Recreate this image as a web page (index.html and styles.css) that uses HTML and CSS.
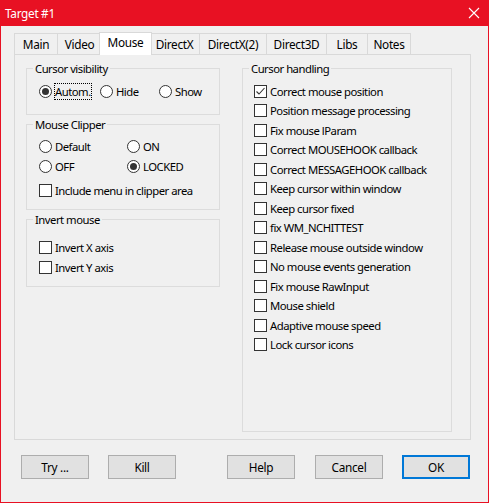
FILE: index.html
```html
<!DOCTYPE html>
<html lang="en">
<head>
<meta charset="utf-8">
<title>Target #1</title>
<link rel="stylesheet" href="styles.css">
</head>
<body>
<div class="window">
  <div class="titlebar">
    <span class="title">Target #1</span>
    <svg class="close" width="12" height="12" viewBox="0 0 12 12"><path d="M1 1L11 11M11 1L1 11" stroke="#fff" stroke-width="1.1" fill="none"/></svg>
  </div>
  <div class="client">
    <div class="tabs">
      <div class="tab t-main">Main</div>
      <div class="tab t-video">Video</div>
      <div class="tab t-mouse selected">Mouse</div>
      <div class="tab t-dx">DirectX</div>
      <div class="tab t-dx2">DirectX(2)</div>
      <div class="tab t-d3d">Direct3D</div>
      <div class="tab t-libs">Libs</div>
      <div class="tab t-notes">Notes</div>
    </div>
    <div class="panel">
      <div class="col-left">
        <div class="group g-vis">
          <div class="legend">Cursor visibility</div>
          <div class="vis-row">
            <div class="item"><span class="radio on"></span><span class="label focus">Autom.</span></div>
            <div class="item"><span class="radio"></span><span class="label">Hide</span></div>
            <div class="item"><span class="radio"></span><span class="label">Show</span></div>
          </div>
        </div>
        <div class="group g-clip">
          <div class="legend">Mouse Clipper</div>
          <div class="clip-grid">
            <div class="item"><span class="radio"></span><span class="label">Default</span></div>
            <div class="item"><span class="radio"></span><span class="label">ON</span></div>
            <div class="item"><span class="radio"></span><span class="label">OFF</span></div>
            <div class="item"><span class="radio on"></span><span class="label">LOCKED</span></div>
          </div>
          <div class="item clip-menu"><span class="check"></span><span class="label">Include menu in clipper area</span></div>
        </div>
        <div class="group g-inv">
          <div class="legend">Invert mouse</div>
          <div class="inv-list">
            <div class="item"><span class="check"></span><span class="label">Invert X axis</span></div>
            <div class="item"><span class="check"></span><span class="label">Invert Y axis</span></div>
          </div>
        </div>
      </div>
      <div class="group g-cursor">
        <div class="legend">Cursor handling</div>
        <div class="cursor-list">
          <div class="item"><span class="check"><svg width="11" height="11" viewBox="0 0 11 11"><path d="M1.5 5.5L4 8L9.5 2" stroke="#333" stroke-width="1.1" fill="none"/></svg></span><span class="label">Correct mouse position</span></div>
          <div class="item"><span class="check"></span><span class="label">Position message processing</span></div>
          <div class="item"><span class="check"></span><span class="label">Fix mouse lParam</span></div>
          <div class="item"><span class="check"></span><span class="label">Correct MOUSEHOOK callback</span></div>
          <div class="item"><span class="check"></span><span class="label">Correct MESSAGEHOOK callback</span></div>
          <div class="item"><span class="check"></span><span class="label">Keep cursor within window</span></div>
          <div class="item"><span class="check"></span><span class="label">Keep cursor fixed</span></div>
          <div class="item"><span class="check"></span><span class="label">fix WM_NCHITTEST</span></div>
          <div class="item"><span class="check"></span><span class="label">Release mouse outside window</span></div>
          <div class="item"><span class="check"></span><span class="label">No mouse events generation</span></div>
          <div class="item"><span class="check"></span><span class="label">Fix mouse RawInput</span></div>
          <div class="item"><span class="check"></span><span class="label">Mouse shield</span></div>
          <div class="item"><span class="check"></span><span class="label">Adaptive mouse speed</span></div>
          <div class="item"><span class="check"></span><span class="label">Lock cursor icons</span></div>
        </div>
      </div>
    </div>
    <div class="buttons">
      <button class="btn b-try">Try ...</button>
      <button class="btn b-kill">Kill</button>
      <button class="btn b-help">Help</button>
      <button class="btn b-cancel">Cancel</button>
      <button class="btn b-ok default">OK</button>
    </div>
  </div>
</div>
</body>
</html>
```
FILE: styles.css
```css
* { box-sizing: border-box; }
html, body { margin: 0; padding: 0; }
body {
  font-family: "Noto Sans", "Open Sans", sans-serif;
  font-size: 11.3px;
  letter-spacing: -0.5px;
  color: #000;
  background: #fff;
}
.window {
  width: 489px;
  height: 503px;
  border: 1px solid #e81123;
  border-top: 0;
  background: #f0f0f0;
  display: flex;
  flex-direction: column;
}
.titlebar {
  height: 26px;
  flex: none;
  background: #e81123;
  color: #fff;
  display: flex;
  align-items: center;
  justify-content: space-between;
  padding: 0 8px 0 4px;
  font-size: 11.8px;
  letter-spacing: -0.3px;
}
.title { line-height: 16px; }
.close { display: block; }
.client {
  flex: 1;
  padding: 6px 17px 0 13px;
}
.tabs {
  display: flex;
  align-items: flex-end;
  height: 22px;
}
.tab {
  height: 21px;
  border: 1px solid #d9d9d9;
  border-bottom: 0;
  margin-right: -1px;
  background: #f0f0f0;
  line-height: 20px;
  text-align: center;
  white-space: nowrap;
  font-size: 11.8px;
  letter-spacing: -0.3px;
}
.tab.selected {
  height: 23px;
  margin: 0 -3px -1px -2px;
  background: #fff;
  line-height: 19px;
  position: relative;
  z-index: 1;
}
.t-main { width: 44px; }
.t-video { width: 45px; }
.t-mouse { width: 53px; }
.t-dx { width: 51px; }
.t-dx2 { width: 68px; }
.t-d3d { width: 61px; }
.t-libs { width: 42px; }
.t-notes { width: 44px; }

.panel {
  height: 386px;
  border: 1px solid #d9d9d9;
  display: flex;
  align-items: flex-start;
  gap: 22px;
  padding: 13px 0 0 11px;
}
.col-left {
  width: 194px;
  display: flex;
  flex-direction: column;
  gap: 9px;
}
.group {
  border: 1px solid #dcdcdc;
}
.legend {
  width: fit-content;
  margin: -8px 0 0 6px;
  padding: 0 2px;
  line-height: 16px;
  background: #f0f0f0;
}
.item {
  display: flex;
  align-items: center;
  height: 20px;
  white-space: nowrap;
}
.radio, .check {
  flex: none;
  width: 13px;
  height: 13px;
  border: 1px solid #333;
  background: #fff;
  display: flex;
  align-items: center;
  justify-content: center;
}
.radio { border-radius: 50%; }
.radio.on::after {
  content: "";
  width: 7px;
  height: 7px;
  border-radius: 50%;
  background: #333;
}
.check svg { display: block; }
.label {
  margin-left: 2px;
  border: 1px dotted transparent;
  line-height: 15px;
}
.label.focus { border-color: #000; }

.g-vis { padding-bottom: 13px; }
.vis-row {
  margin-top: 4px;
  padding-left: 12px;
  display: grid;
  grid-template-columns: 61px 59px auto;
}
.g-clip { padding-bottom: 9px; }
.clip-grid {
  margin-top: 3px;
  padding-left: 12px;
  display: grid;
  grid-template-columns: 88px auto;
}
.clip-menu { margin-top: 4px; padding-left: 12px; }
.g-inv { padding-bottom: 9px; }
.inv-list { margin-top: 9px; padding-left: 12px; }

.g-cursor {
  width: 210px;
  height: 364px;
}
.cursor-list { margin-top: 4.5px; padding-left: 11px; }
.cursor-list .item { height: 19.5px; }

.buttons {
  display: flex;
  margin-top: 15px;
}
.btn {
  width: 68px;
  height: 24px;
  padding: 0;
  border: 1px solid #adadad;
  background: #e1e1e1;
  font: inherit;
  font-size: 11.8px;
  letter-spacing: -0.3px;
  color: #000;
}
.btn.default { border: 2px solid #0078d7; }
.b-try { margin-left: 7px; }
.b-kill { margin-left: 19px; }
.b-help { margin-left: 51px; }
.b-cancel { margin-left: 20px; }
.b-ok { margin-left: 19px; }
```
